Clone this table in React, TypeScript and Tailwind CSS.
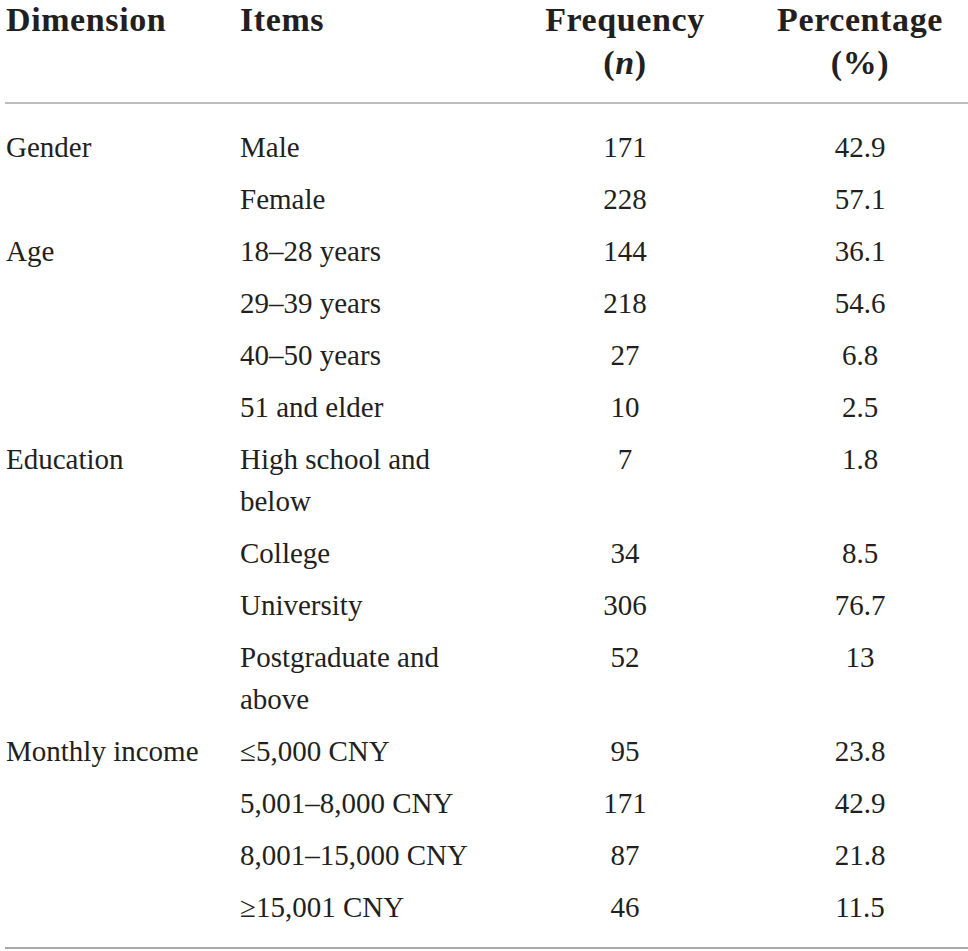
import React from "react";

type Row = { dim?: string; item: string; n: string; pct: string };

const rows: Row[] = [
  { dim: "Gender", item: "Male", n: "171", pct: "42.9" },
  { item: "Female", n: "228", pct: "57.1" },
  { dim: "Age", item: "18–28 years", n: "144", pct: "36.1" },
  { item: "29–39 years", n: "218", pct: "54.6" },
  { item: "40–50 years", n: "27", pct: "6.8" },
  { item: "51 and elder", n: "10", pct: "2.5" },
  { dim: "Education", item: "High school and below", n: "7", pct: "1.8" },
  { item: "College", n: "34", pct: "8.5" },
  { item: "University", n: "306", pct: "76.7" },
  { item: "Postgraduate and above", n: "52", pct: "13" },
  { dim: "Monthly income", item: "≤5,000 CNY", n: "95", pct: "23.8" },
  { item: "5,001–8,000 CNY", n: "171", pct: "42.9" },
  { item: "8,001–15,000 CNY", n: "87", pct: "21.8" },
  { item: "≥15,001 CNY", n: "46", pct: "11.5" },
];

const cols = "grid grid-cols-[235px_258px_254px_216px]";

export default function App() {
  return (
    <div className="min-h-[951px] w-[968px] bg-white font-['Liberation_Serif',_'Times_New_Roman',_serif] text-[#231f20]">
      <div className="pl-[5px]">
        {/* header */}
        <div className={`${cols} border-b-2 border-[#bcbcbc] pb-[18px] text-[34px] font-bold leading-[43px] tracking-[0.6px]`}>
          <div className="pl-[1px] -mt-[2px]">Dimension</div>
          <div className="-mt-[2px]">Items</div>
          <div className="-mt-[2px] text-center">
            Frequency
            <br />(<i>n</i>)
          </div>
          <div className="-mt-[2px] text-center">
            Percentage
            <br />
            (%)
          </div>
        </div>

        {/* body */}
        <div className="border-b-2 border-[#a9a9a9] pt-[17px] pb-[14px] text-[29px] leading-[42px]">
          {rows.map((r, i) => (
            <div key={i} className={`${cols} py-[5px]`}>
              <div className="pl-[1px]">{r.dim ?? ""}</div>
              <div className="pr-[10px]">{r.item}</div>
              <div className="text-center">{r.n}</div>
              <div className="text-center">{r.pct}</div>
            </div>
          ))}
        </div>
      </div>
    </div>
  );
}
